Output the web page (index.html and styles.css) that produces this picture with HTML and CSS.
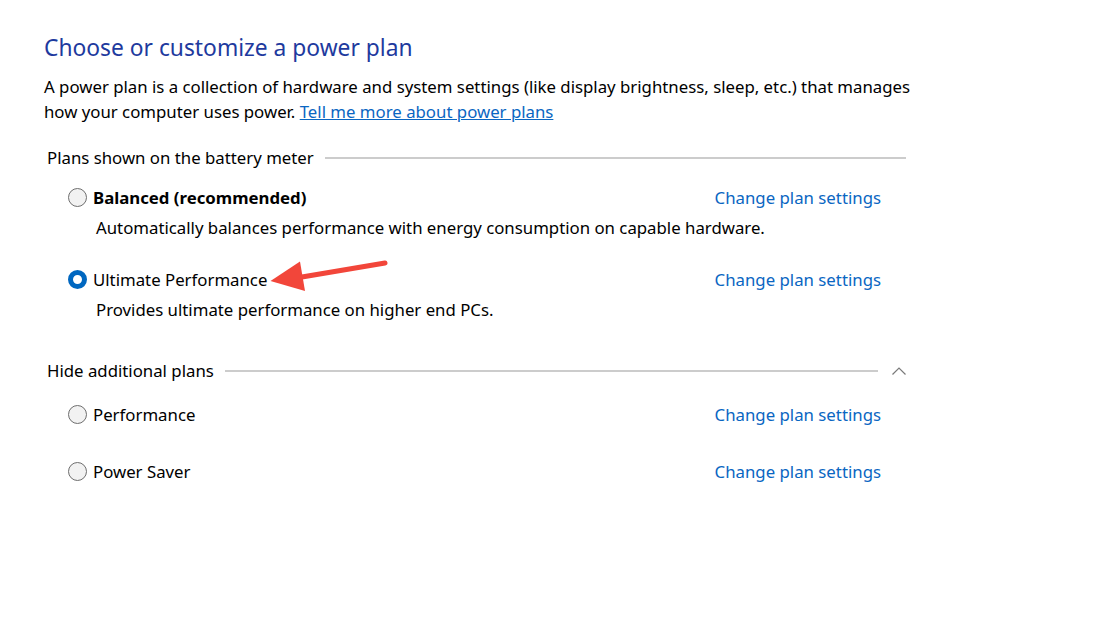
FILE: index.html
```html
<!DOCTYPE html>
<html>
<head>
<meta charset="utf-8">
<link rel="stylesheet" href="styles.css">
</head>
<body>
<div class="page">
  <h1 class="title">Choose or customize a power plan</h1>
  <p class="intro">A power plan is a collection of hardware and system settings (like display brightness, sleep, etc.) that manages how your computer uses power. <a class="link underline" href="#">Tell me more about power plans</a></p>

  <div class="group-head">
    <span class="group-label">Plans shown on the battery meter</span>
    <span class="rule"></span>
  </div>

  <div class="plans">
    <div class="plan">
      <div class="plan-row">
        <span class="radio"></span>
        <span class="plan-name bold">Balanced (recommended)</span>
        <a class="link change" href="#">Change plan settings</a>
      </div>
      <div class="plan-desc">Automatically balances performance with energy consumption on capable hardware.</div>
    </div>
    <div class="plan second">
      <div class="plan-row">
        <span class="radio checked"></span>
        <span class="plan-name">Ultimate Performance</span>
        <a class="link change" href="#">Change plan settings</a>
      </div>
      <div class="plan-desc">Provides ultimate performance on higher end PCs.</div>
    </div>
  </div>

  <div class="group-head hide">
    <span class="group-label">Hide additional plans</span>
    <span class="rule short"></span>
    <svg class="chevron" width="16" height="10" viewBox="0 0 16 10"><path d="M1.5 8.5 L8 2 L14.5 8.5" fill="none" stroke="#7a7a7a" stroke-width="1.2"/></svg>
  </div>

  <div class="plans extra">
    <div class="plan">
      <div class="plan-row">
        <span class="radio"></span>
        <span class="plan-name">Performance</span>
        <a class="link change" href="#">Change plan settings</a>
      </div>
    </div>
    <div class="plan saver">
      <div class="plan-row">
        <span class="radio"></span>
        <span class="plan-name">Power Saver</span>
        <a class="link change" href="#">Change plan settings</a>
      </div>
    </div>
  </div>

  <svg class="arrow" width="130" height="40" viewBox="0 0 130 40">
    <line x1="117" y1="5" x2="28" y2="20" stroke="#f2463a" stroke-width="5" stroke-linecap="round"/>
    <polygon points="2.5,23 32,3.5 37,33" fill="#f2463a"/>
  </svg>
</div>
</body>
</html>
```

FILE: styles.css
```css
html, body {
  margin: 0;
  padding: 0;
  background: #ffffff;
}

body {
  font-family: "Noto Sans", "Open Sans", sans-serif;
  font-size: 16.8px;
  color: #000000;
}

.page {
  position: relative;
  padding: 32px 0 0 44px;
  width: 880px;
}

.title {
  margin: 0;
  font-size: 22.8px;
  font-weight: 400;
  line-height: 32px;
  color: #1e3a9e;
}

.intro {
  margin: 10px 0 0 0;
  line-height: 25px;
  width: 890px;
}

.link {
  color: #0a66c2;
  text-decoration: none;
}

.underline {
  text-decoration: underline;
}

.group-head {
  display: flex;
  align-items: center;
  margin: 21px 0 0 3px;
  height: 25px;
  width: 859px;
}

.group-label {
  white-space: nowrap;
}

.rule {
  flex: 1;
  height: 2px;
  background: #cccccc;
  margin-left: 11px;
}

.group-head.hide {
  margin-top: 36px;
  width: 860px;
}

.rule.short {
  margin-right: 13px;
}

.chevron {
  flex: none;
}

.plans {
  margin: 15px 0 0 24px;
  width: 813px;
}

.plans.extra {
  margin-top: 19px;
}

.plan.second {
  margin-top: 27px;
}

.plan.saver {
  margin-top: 32px;
}

.plan-row {
  display: flex;
  align-items: center;
  height: 25px;
}

.radio {
  width: 17px;
  height: 17px;
  border: 1px solid #6e6e6e;
  border-radius: 50%;
  background: #f2f2f2;
  box-sizing: content-box;
  flex: none;
}

.radio.checked {
  width: 9px;
  height: 9px;
  border: 5px solid #0067c0;
  background: #ffffff;
}

.plan-name {
  margin-left: 6px;
  flex: 1;
}

.bold {
  font-weight: 700;
}

.change {
  flex: none;
}

.plan-desc {
  margin: 5px 0 0 28px;
  line-height: 25px;
}

.arrow {
  position: absolute;
  left: 268px;
  top: 258px;
}
```
